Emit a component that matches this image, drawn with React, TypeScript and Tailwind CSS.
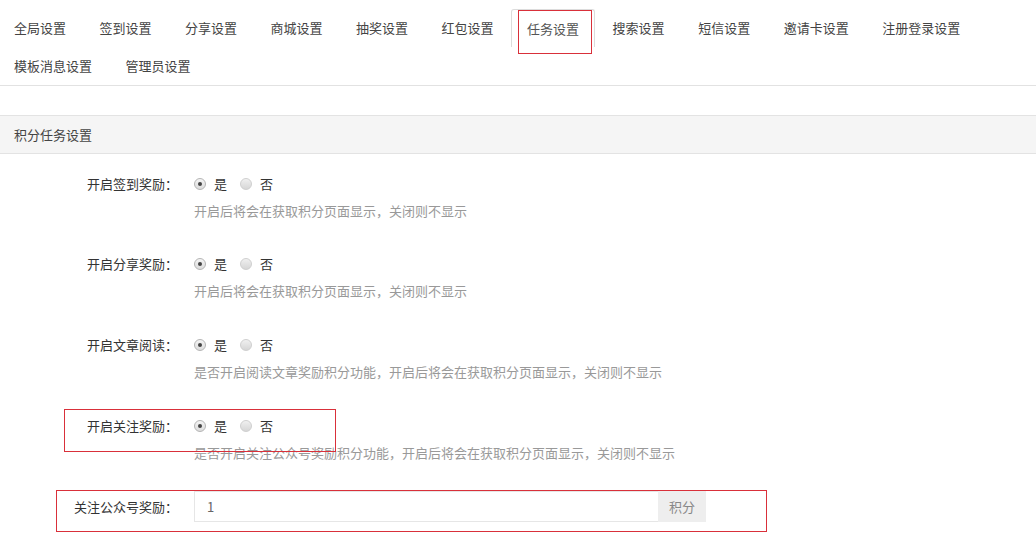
import React from "react";

const TABS = [
  "全局设置", "签到设置", "分享设置", "商城设置", "抽奖设置", "红包设置",
  "任务设置", "搜索设置", "短信设置", "邀请卡设置", "注册登录设置",
  "模板消息设置", "管理员设置",
];

const SWITCHES = [
  { label: "开启签到奖励：", help: "开启后将会在获取积分页面显示，关闭则不显示", h: "h-[80px]" },
  { label: "开启分享奖励：", help: "开启后将会在获取积分页面显示，关闭则不显示", h: "h-[81px]" },
  { label: "开启文章阅读：", help: "是否开启阅读文章奖励积分功能，开启后将会在获取积分页面显示，关闭则不显示", h: "h-[81px]" },
  { label: "开启关注奖励：", help: "是否开启关注公众号奖励积分功能，开启后将会在获取积分页面显示，关闭则不显示", h: "h-[81px]", marked: true },
];

function Radio({ checked, text }: { checked: boolean; text: string }) {
  return (
    <span className="flex items-center">
      <span
        className={`w-[12px] h-[12px] rounded-full border flex items-center justify-center ${
          checked
            ? "border-[#b5b5b5] bg-gradient-to-b from-[#f4f4f4] to-[#dcdcdc]"
            : "border-[#cfcfcf] bg-gradient-to-b from-[#f0f0f0] to-[#d6d6d6]"
        }`}
      >
        {checked && <span className="w-[4px] h-[4px] rounded-full bg-[#444]" />}
      </span>
      <span className="ml-[8px] text-[#333]">{text}</span>
    </span>
  );
}

export default function App() {
  return (
    <div
      className="w-[1036px] min-h-[547px] bg-white text-[13px] text-[#333] overflow-hidden"
      style={{ fontFamily: '"Noto Sans CJK SC", "Liberation Sans", sans-serif' }}
    >
      {/* 标签页 */}
      <div className="pt-[9px] border-b border-[#e2e2e2]">
        <div className="flex flex-wrap ml-[-2px]">
          {TABS.map(t => (
            <div
              key={t}
              className={`relative h-[38px] px-[15px] mr-[1.5px] flex items-center leading-[20px] whitespace-nowrap border ${
                t === "任务设置"
                  ? "border-b-0 border-[#dcdcdc] rounded-t-[3px] text-[#555]"
                  : "border-transparent text-[#444]"
              }`}
            >
              {t}
              {t === "任务设置" && (
                <span className="absolute left-[6px] top-0 w-[74px] h-[44px] border border-[#d9303a]" />
              )}
            </div>
          ))}
        </div>
      </div>

      {/* 积分任务设置 */}
      <div className="mt-[29px] h-[39px] flex items-center px-[14px] bg-[#f5f5f5] border-y border-[#e3e3e3] text-[#444]">
        积分任务设置
      </div>

      <div className="pt-[20px]">
        {SWITCHES.map(s => (
          <div key={s.label} className={`relative flex ${s.h}`}>
            <div className="w-[178px] text-right leading-[20px] text-[#333]">{s.label}</div>
            <div className="pl-[16px]">
              <div className="flex items-center h-[20px] gap-[13px]">
                <Radio checked text="是" />
                <Radio checked={false} text="否" />
              </div>
              <div className="mt-[7px] leading-[20px] text-[#999]">{s.help}</div>
            </div>
            {s.marked && (
              <span className="absolute left-[64px] top-[-7px] w-[272px] h-[43px] border border-[#d9303a] pointer-events-none" />
            )}
          </div>
        ))}

        {/* 关注公众号奖励 */}
        <div className="relative flex items-center h-[31px] mt-[-6px]">
          <div className="w-[178px] text-right leading-[20px] text-[#333]">关注公众号奖励：</div>
          <div className="ml-[16px] flex h-[31px]">
            <div className="w-[464px] border border-[#e6e6e6] border-r-0 flex items-center pl-[12px] text-[#666]">1</div>
            <div className="w-[48px] bg-[#eeeeee] flex items-center justify-center text-[#888]">积分</div>
          </div>
          <span className="absolute left-[56px] top-[-1px] w-[711px] h-[42px] border border-[#d9303a] pointer-events-none" />
        </div>
      </div>
    </div>
  );
}
